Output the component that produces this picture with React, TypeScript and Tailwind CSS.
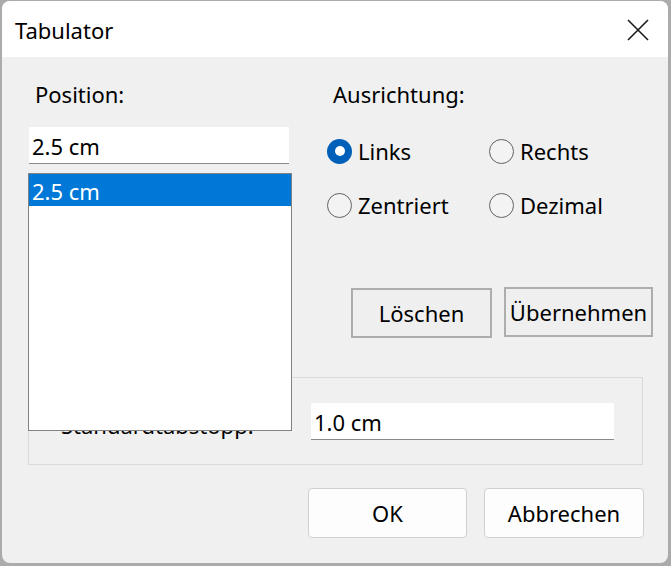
import React from "react";

function Radio({ checked, label }: { checked?: boolean; label: string }) {
  return (
    <div className="flex h-[30px] items-center">
      {checked ? (
        <div className="flex h-[25px] w-[25px] items-center justify-center rounded-full bg-[#005fb8]">
          <div className="h-[10px] w-[10px] rounded-full bg-white" />
        </div>
      ) : (
        <div className="h-[25px] w-[25px] rounded-full border-[1.5px] border-[#626262] bg-[#f3f3f3]" />
      )}
      <span className="ml-[6px]">{label}</span>
    </div>
  );
}

export default function App() {
  return (
    <div
      className="h-[566px] w-[671px] bg-[#ababab] pb-[3px] pl-[2px] pr-[3px] pt-[1px] text-[22px] leading-[30px] text-black"
      style={{ fontFamily: '"Noto Sans", sans-serif' }}
    >
      <div className="flex h-full flex-col overflow-hidden rounded-[8px] bg-[#f0f0f0]">
        {/* Title bar */}
        <div className="flex h-[56px] items-center justify-between bg-white pl-[13px] pr-[19px]">
          <span className="pt-[1px]">Tabulator</span>
          <svg width="22" height="22" viewBox="0 0 22 22" className="mt-[1px]">
            <path d="M1 1 L21 21 M21 1 L1 21" stroke="#1a1a1a" strokeWidth="1.6" fill="none" />
          </svg>
        </div>

        {/* Body */}
        <div className="flex pl-[26px]">
          {/* Left column */}
          <div className="flex w-[264px] flex-col">
            <div className="ml-[7px] mt-[22px] h-[30px]">Position:</div>
            <div className="ml-[1px] mt-[18px] h-[37px] w-[260px] border-b border-[#8a8a8a] bg-white pl-[3px] pt-[4px]">
              2.5 cm
            </div>
            <div className="relative z-10 mt-[9px] h-[258px] w-[264px] border border-[#828282] bg-white">
              <div className="h-[32px] bg-[#0078d7] pl-[3px] pt-[2px] text-white">2.5 cm</div>
            </div>
          </div>

          {/* Right column */}
          <div className="ml-[35px] flex flex-col">
            <div className="ml-[6px] mt-[22px] h-[30px]">Ausrichtung:</div>
            <div className="mt-[27px] grid grid-cols-[162px_162px] gap-y-[24px]">
              <Radio checked label="Links" />
              <Radio label="Rechts" />
              <Radio label="Zentriert" />
              <Radio label="Dezimal" />
            </div>
            <div className="ml-[24px] mt-[68px] flex items-start gap-[12px]">
              <div className="flex h-[50px] w-[141px] items-center justify-center border-2 border-[#adadad] bg-[#efefef]">
                Löschen
              </div>
              <div className="-mt-[1px] flex h-[50px] w-[149px] items-center justify-center whitespace-nowrap border-2 border-[#adadad] bg-[#efefef]">
                Übernehmen
              </div>
            </div>
          </div>
        </div>

        {/* Group box */}
        <div className="ml-[26px] mt-[-54px] flex h-[88px] w-[615px] items-start border border-[#dadada]">
          <div className="ml-[32px] mt-[32px] w-[250px] whitespace-nowrap">Standardtabstopp:</div>
          <div className="mt-[25px] h-[37px] w-[303px] border-b border-[#8a8a8a] bg-white pl-[3px] pt-[4px]">
            1.0 cm
          </div>
        </div>

        {/* Bottom buttons */}
        <div className="mt-[23px] flex justify-end gap-[17px] pr-[24px]">
          <div className="flex h-[50px] w-[159px] items-center justify-center rounded-[4px] border border-[#d0d0d0] bg-[#fdfdfd]">
            OK
          </div>
          <div className="flex h-[50px] w-[160px] items-center justify-center rounded-[4px] border border-[#d0d0d0] bg-[#fdfdfd]">
            Abbrechen
          </div>
        </div>
      </div>
    </div>
  );
}
